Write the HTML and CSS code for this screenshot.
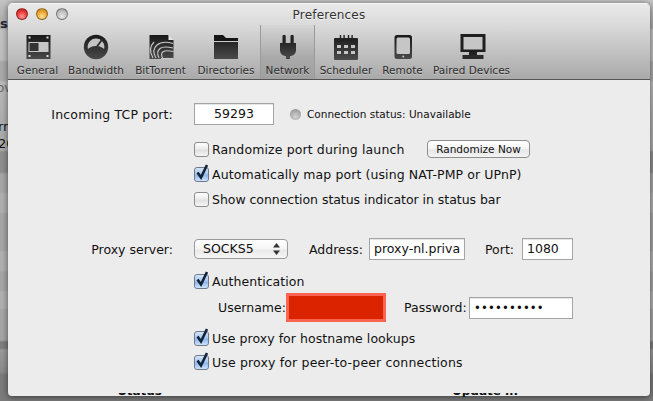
FILE: index.html
```html
<!DOCTYPE html>
<html lang="en">
<head>
<meta charset="utf-8">
<title>Preferences</title>
<link rel="stylesheet" href="styles.css">
</head>
<body>
<div class="desktop">
  <span class="frag frag-s">s</span>
  <span class="frag frag-ov">ov</span>
  <span class="frag frag-rr">rr</span>
  <span class="frag frag-20">20</span>

  <main class="window">
    <header class="chrome">
      <div class="titlebar">
        <div class="lights">
          <span class="light light-red"></span>
          <span class="light light-yellow"></span>
          <span class="light light-grey"></span>
        </div>
        <h1 class="title">Preferences</h1>
      </div>
      <nav class="toolbar">
        <div class="tool">
          <svg class="icon" viewBox="0 0 40 26">
            <defs><linearGradient id="ink" gradientUnits="userSpaceOnUse" x1="0" y1="0" x2="0" y2="26"><stop offset="0" stop-color="#161616"/><stop offset="1" stop-color="#4c4c4c"/></linearGradient></defs>
            <rect x="8.5" y="1" width="24" height="24" fill="url(#ink)"/>
            <rect x="10.5" y="8" width="20" height="10" fill="#c6c6c6"/>
            <rect x="11.5" y="9" width="9" height="8" fill="#333"/>
            <g fill="#d8d8d8"><rect x="10.5" y="2.5" width="2" height="2"/><rect x="28.5" y="2.5" width="2" height="2"/><rect x="10.5" y="21" width="2" height="2"/><rect x="28.5" y="21" width="2" height="2"/></g>
          </svg>
          <span class="tool-label">General</span>
        </div>
        <div class="tool">
          <svg class="icon" viewBox="0 0 40 26">
            <circle cx="20" cy="13" r="12.2" fill="url(#ink)"/>
            <circle cx="20" cy="13" r="8.4" fill="#c2c2c2"/>
            <path d="M11 16.5c1.5-3 5-4.6 9-4.6s7.500 1.600 9 4.600v3l-4 3h-10l-4-3z" fill="url(#ink)"/>
            <path d="M21 12.500l5.500-7.500" stroke="#2a2a2a" stroke-width="1.800"/>
          </svg>
          <span class="tool-label">Bandwidth</span>
        </div>
        <div class="tool">
          <svg class="icon" viewBox="0 0 40 26">
            <path d="M8.500 1h18.500l5.500 5.500v18.500h-24z" fill="url(#ink)"/>
            <path d="M27.500 1v5h5z" fill="#e6e6e6"/>
            <g fill="none" stroke="#c8c8c8" stroke-width="1.100">
              <path d="M15 24c-3-5-2.500-10 1-13 3.500-3 9-3.500 16-1.500"/>
              <path d="M18 24c-2-4-1.500-7.500 1-9.500s7-2 13-.500"/>
              <path d="M21.500 24c-1.500-3-1-5 .500-6.200 2-1.300 5.500-1.300 10.500-.300"/>
              <path d="M12 24c-3.500-6-3-12 1-16"/>
            </g>
            <path d="M20 24.500h12.500" stroke="#ccc"/>
          </svg>
          <span class="tool-label">BitTorrent</span>
        </div>
        <div class="tool">
          <svg class="icon" viewBox="0 0 40 26">
            <path d="M8 1h9l3 3h12v3H8z" fill="#151515"/>
            <rect x="8" y="8" width="24" height="17" fill="url(#ink)"/>
          </svg>
          <span class="tool-label">Directories</span>
        </div>
        <div class="tool tool-active">
          <svg class="icon" viewBox="0 0 40 26">
            <rect x="14.500" y="1" width="3.200" height="10" rx="1" fill="#222"/>
            <rect x="22.500" y="1" width="3.200" height="10" rx="1" fill="#222"/>
            <path d="M12 9h16v7c0 3.500-2.500 6-6 6v3h-4v-3c-3.500 0-6-2.500-6-6z" fill="url(#ink)"/>
          </svg>
          <span class="tool-label">Network</span>
        </div>
        <div class="tool">
          <svg class="icon" viewBox="0 0 40 26">
            <rect x="8" y="4" width="24" height="22" rx="1" fill="url(#ink)"/>
            <g fill="none" stroke="#222" stroke-width="1.400"><path d="M14.500 1v4.500a1.800 1.800 0 0 0 3.600 0V1"/><path d="M22.500 1v4.500a1.800 1.800 0 0 0 3.600 0V1"/></g>
            <g fill="#c4c4c4"><rect x="11" y="11" width="4" height="3"/><rect x="18" y="11" width="4" height="3"/><rect x="25" y="11" width="4" height="3"/><rect x="11" y="17" width="4" height="3"/><rect x="18" y="17" width="4" height="3"/><rect x="25" y="17" width="4" height="3"/></g>
          </svg>
          <span class="tool-label">Scheduler</span>
        </div>
        <div class="tool">
          <svg class="icon" viewBox="0 0 40 26">
            <rect x="11.500" y="1" width="17.500" height="24" rx="2.500" fill="url(#ink)"/>
            <rect x="13.500" y="3.500" width="13.500" height="16.500" rx="1.500" fill="#c6c6c6"/>
            <circle cx="20.200" cy="22.500" r="1" fill="#c6c6c6"/>
          </svg>
          <span class="tool-label">Remote</span>
        </div>
        <div class="tool">
          <svg class="icon" viewBox="0 0 40 26">
            <rect x="8.500" y="0" width="25" height="18" fill="#1f1f1f"/>
            <rect x="11.500" y="3" width="19" height="12.500" fill="#c6c6c6"/>
            <rect x="17" y="18" width="8" height="3" fill="#222"/>
            <rect x="10.500" y="21" width="21" height="4" fill="#2a2a2a"/>
          </svg>
          <span class="tool-label">Paired Devices</span>
        </div>
      </nav>
    </header>

    <section class="pane">
      <div class="row row-port">
        <label class="label">Incoming TCP port:</label>
        <div class="controls">
          <span class="field field-port">59293</span>
          <span class="dot"></span>
          <span class="status">Connection status: Unavailable</span>
        </div>
      </div>

      <div class="row row-random">
        <span></span>
        <div class="controls">
          <span class="box"></span>
          <span class="text text-random">Randomize port during launch</span>
          <span class="button">Randomize Now</span>
        </div>
      </div>
      <div class="row row-check">
        <span></span>
        <div class="controls">
          <span class="box box-on"><svg class="tick" viewBox="0 0 16 18"><path d="M3.500 9.500l3.500 5 6-12.500" fill="none" stroke="#14233a" stroke-width="2.600"/></svg></span>
          <span class="text text-auto">Automatically map port (using NAT-PMP or UPnP)</span>
        </div>
      </div>
      <div class="row row-check">
        <span></span>
        <div class="controls">
          <span class="box"></span>
          <span class="text text-show">Show connection status indicator in status bar</span>
        </div>
      </div>

      <div class="row row-proxy">
        <label class="label">Proxy server:</label>
        <div class="controls">
          <span class="select">SOCKS5
            <svg class="arrows" viewBox="0 0 7 12"><path d="M3.500 0L7 4.500H0zM3.500 12L0 7.500h7z" fill="#333"/></svg>
          </span>
          <span class="inline-label label-address">Address:</span>
          <span class="field field-address">proxy-nl.priva</span>
          <span class="inline-label label-portnum">Port:</span>
          <span class="field field-portnum">1080</span>
        </div>
      </div>

      <div class="row row-auth">
        <span></span>
        <div class="controls">
          <span class="box box-on"><svg class="tick" viewBox="0 0 16 18"><path d="M3.500 9.500l3.500 5 6-12.500" fill="none" stroke="#14233a" stroke-width="2.600"/></svg></span>
          <span class="text">Authentication</span>
        </div>
      </div>

      <div class="row row-cred">
        <span></span>
        <div class="controls">
          <span class="inline-label label-user">Username:</span>
          <span class="redact"></span>
          <span class="inline-label label-pass">Password:</span>
          <span class="field field-pass">••••••••••</span>
        </div>
      </div>

      <div class="row row-use">
        <span></span>
        <div class="controls">
          <span class="box box-on"><svg class="tick" viewBox="0 0 16 18"><path d="M3.500 9.500l3.500 5 6-12.500" fill="none" stroke="#14233a" stroke-width="2.600"/></svg></span>
          <span class="text">Use proxy for hostname lookups</span>
        </div>
      </div>
      <div class="row row-check">
        <span></span>
        <div class="controls">
          <span class="box box-on"><svg class="tick" viewBox="0 0 16 18"><path d="M3.500 9.500l3.500 5 6-12.500" fill="none" stroke="#14233a" stroke-width="2.600"/></svg></span>
          <span class="text text-peer">Use proxy for peer-to-peer connections</span>
        </div>
      </div>
    </section>
  </main>

  <span class="tail tail-status"><span>Status</span></span>
  <span class="tail tail-update"><span>Update in</span></span>
</div>
</body>
</html>
```
FILE: styles.css
```css
* { box-sizing: border-box; }
html, body { margin: 0; padding: 0; }
body {
  width: 653px;
  height: 401px;
  overflow: hidden;
  font-family: "DejaVu Sans", sans-serif;
  color: #111;
}
.desktop {
  position: relative;
  width: 653px;
  height: 401px;
  overflow: hidden;
  background: linear-gradient(180deg,
    #c4c4c4 0, #a8a8a8 28px, #c2c2c2 30px, #bdbdbd 60px, #a9a9a9 62px, #a9a9a9 80px,
    #bbb 82px, #b0b0b0 112px, #ababab 150px, #8f8f8f 152px, #8f8f8f 172px,
    #a6a6a6 174px, #a6a6a6 192px, #b0b0b0 194px, #b0b0b0 212px, #a5a5a5 214px, #a5a5a5 250px,
    #b0b0b0 252px, #b0b0b0 270px, #a5a5a5 272px, #a5a5a5 290px, #b0b0b0 292px, #b0b0b0 308px,
    #a5a5a5 310px, #a5a5a5 340px, #7e7e7e 342px, #7e7e7e 348px, #9a9a9a 350px,
    #8a8a8a 372px, #7b7b7b 375px, #7b7b7b 401px);
}
.frag {
  position: absolute;
  font-size: 13px;
  line-height: 16px;
  color: #111;
}
.frag-s { left: 0; top: 16px; font-weight: bold; color: #223; }
.frag-ov { left: -3px; top: 80px; font-size: 12px; color: #666; }
.frag-rr { left: -2px; top: 119px; }
.frag-20 { left: -2px; top: 136px; }

.window {
  position: absolute;
  left: 8px;
  top: 3px;
  width: 642px;
  height: 393px;
  border-radius: 5px 5px 4px 4px;
  overflow: hidden;
  background: #ececec;
  box-shadow: 0 1px 6px rgba(0, 0, 0, .55);
  display: flex;
  flex-direction: column;
}
.chrome {
  height: 77px;
  background: linear-gradient(180deg, #eaeaea 0, #dadada 22px, #a9a9a9 100%);
  border-bottom: 1px solid #555;
  box-shadow: inset 0 1px 0 #f5f5f5;
}
.titlebar {
  position: relative;
  height: 23px;
  display: flex;
  align-items: center;
  justify-content: center;
}
.title {
  margin: 0;
  font-size: 12px;
  font-weight: normal;
  letter-spacing: .2px;
  color: #333;
  text-shadow: 0 1px 0 rgba(255, 255, 255, .6);
}
.lights {
  position: absolute;
  left: 8px;
  top: 5px;
  display: flex;
  gap: 8px;
}
.light {
  width: 12px;
  height: 12px;
  border-radius: 50%;
  border: 1px solid rgba(0, 0, 0, .35);
}
.light-red { background: radial-gradient(circle at 50% 75%, #ff9c9c 0, #e83838 55%, #b81c1c 100%); }
.light-yellow { background: radial-gradient(circle at 50% 75%, #ffe39a 0, #e8a52f 55%, #b8791a 100%); }
.light-grey { background: radial-gradient(circle at 50% 75%, #e8e8e8 0, #bdbdbd 60%, #8e8e8e 100%); }

.toolbar {
  display: grid;
  grid-template-columns: 51px 66px 63px 68px 55px 62px 51px 87px;
  padding-left: 4px;
  height: 53px;
}
.tool {
  display: flex;
  flex-direction: column;
  align-items: center;
  padding-top: 8px;
}
.tool-active {
  background: linear-gradient(180deg, rgba(0,0,0,.02), rgba(0,0,0,.1) 60%, rgba(0,0,0,.06));
  border-left: 1px solid #9a9a9a;
  border-right: 1px solid #9a9a9a;
  margin-top: -1px;
  padding-top: 9px;
}
.icon {
  display: block;
  width: 40px;
  height: 26px;
  overflow: visible;
  flex: none;
}
.tool-label {
  margin-top: 3px;
  font-size: 10.500px;
  line-height: 14px;
  white-space: nowrap;
  color: #2c2c2c;
  text-shadow: 0 1px 0 rgba(255, 255, 255, .35);
}

.pane {
  flex: 1;
  padding-top: 23px;
  font-size: 12.500px;
}
.row {
  display: grid;
  grid-template-columns: 165px 1fr;
  column-gap: 21px;
  align-items: center;
}
.label { text-align: right; white-space: nowrap; }
.row-port .label { letter-spacing: .17px; }
.controls {
  display: flex;
  align-items: center;
  white-space: nowrap;
}
.row-port { height: 22px; }
.row-random { height: 20px; margin-top: 14px; }
.row-check { height: 20px; margin-top: 5px; }
.row-proxy { height: 22px; margin-top: 29px; }
.row-auth { height: 20px; margin-top: 11px; }
.row-cred { height: 29px; margin-top: 2px; }
.row-use { height: 20px; margin-top: 6px; }
.row-check:last-child { margin-top: 4px; }

.field {
  display: block;
  height: 22px;
  line-height: 20px;
  background: #fff;
  border: 1px solid #a4a4a4;
  box-shadow: inset 0 1px 0 #e6e6e6;
  flex: none;
  overflow: hidden;
}
.field-port { width: 80px; text-align: center; }
.dot {
  width: 11px;
  height: 11px;
  border-radius: 50%;
  margin-left: 16px;
  flex: none;
  background: radial-gradient(circle at 50% 70%, #d4d4d4 0, #a8a8a8 60%, #7c7c7c 100%);
}
.status { margin-left: 6px; font-size: 10.500px; }

.box {
  position: relative;
  width: 15px;
  height: 15px;
  border-radius: 3px;
  border: 1px solid #8d8d8d;
  background: linear-gradient(180deg, #fff 0, #ececec 45%, #e0e0e0 55%, #f6f6f6 100%);
  flex: none;
}
.box-on {
  border-color: #6d7a8d;
  background: linear-gradient(180deg, #d6e5f7 0, #a9c8ee 45%, #8db6e8 55%, #cfe4fb 100%);
}
.tick {
  position: absolute;
  left: -1px;
  top: -5px;
  width: 16px;
  height: 18px;
}
.text { margin-left: 3px; letter-spacing: .05px; }
.text-random { width: 215px; letter-spacing: .12px; }
.text-auto { letter-spacing: .09px; }
.text-show { letter-spacing: -.04px; }
.text-peer { letter-spacing: .16px; }

.button {
  display: block;
  width: 103px;
  height: 18px;
  line-height: 16px;
  text-align: center;
  font-size: 10.500px;
  background: linear-gradient(180deg, #fff 0, #f4f4f4 50%, #e6e6e6 55%, #f4f4f4 100%);
  border: 1px solid #8e8e8e;
  border-radius: 4px;
}

.select {
  position: relative;
  display: block;
  width: 94px;
  height: 20px;
  line-height: 18px;
  padding-left: 8px;
  background: linear-gradient(180deg, #fff 0, #f5f5f5 50%, #e8e8e8 55%, #f6f6f6 100%);
  border: 1px solid #9a9a9a;
  border-radius: 4px;
  flex: none;
}
.arrows {
  position: absolute;
  right: 7px;
  top: 3px;
  width: 7px;
  height: 12px;
}
.inline-label { flex: none; }
.label-address { margin-left: 21px; width: 60px; }
.field-address { width: 96px; padding-left: 4px; }
.label-portnum { margin-left: 20px; width: 37px; }
.field-portnum { width: 51px; padding-left: 4px; }
.label-user { margin-left: 24px; width: 68px; }
.redact {
  display: block;
  width: 100px;
  height: 29px;
  background: #dc2300;
  border: 3px solid #fb6450;
  flex: none;
}
.label-pass { margin-left: 18px; width: 65px; }
.field-pass { width: 104px; padding-left: 4px; font-size: 11.500px; letter-spacing: .2px; }

.tail {
  position: absolute;
  top: 393px;
  height: 4px;
  overflow: hidden;
  font-size: 12px;
  font-weight: bold;
}
.tail span { display: block; margin-top: -9px; line-height: 14px; }
.tail-status { left: 118px; }
.tail-update { left: 452px; }
```
